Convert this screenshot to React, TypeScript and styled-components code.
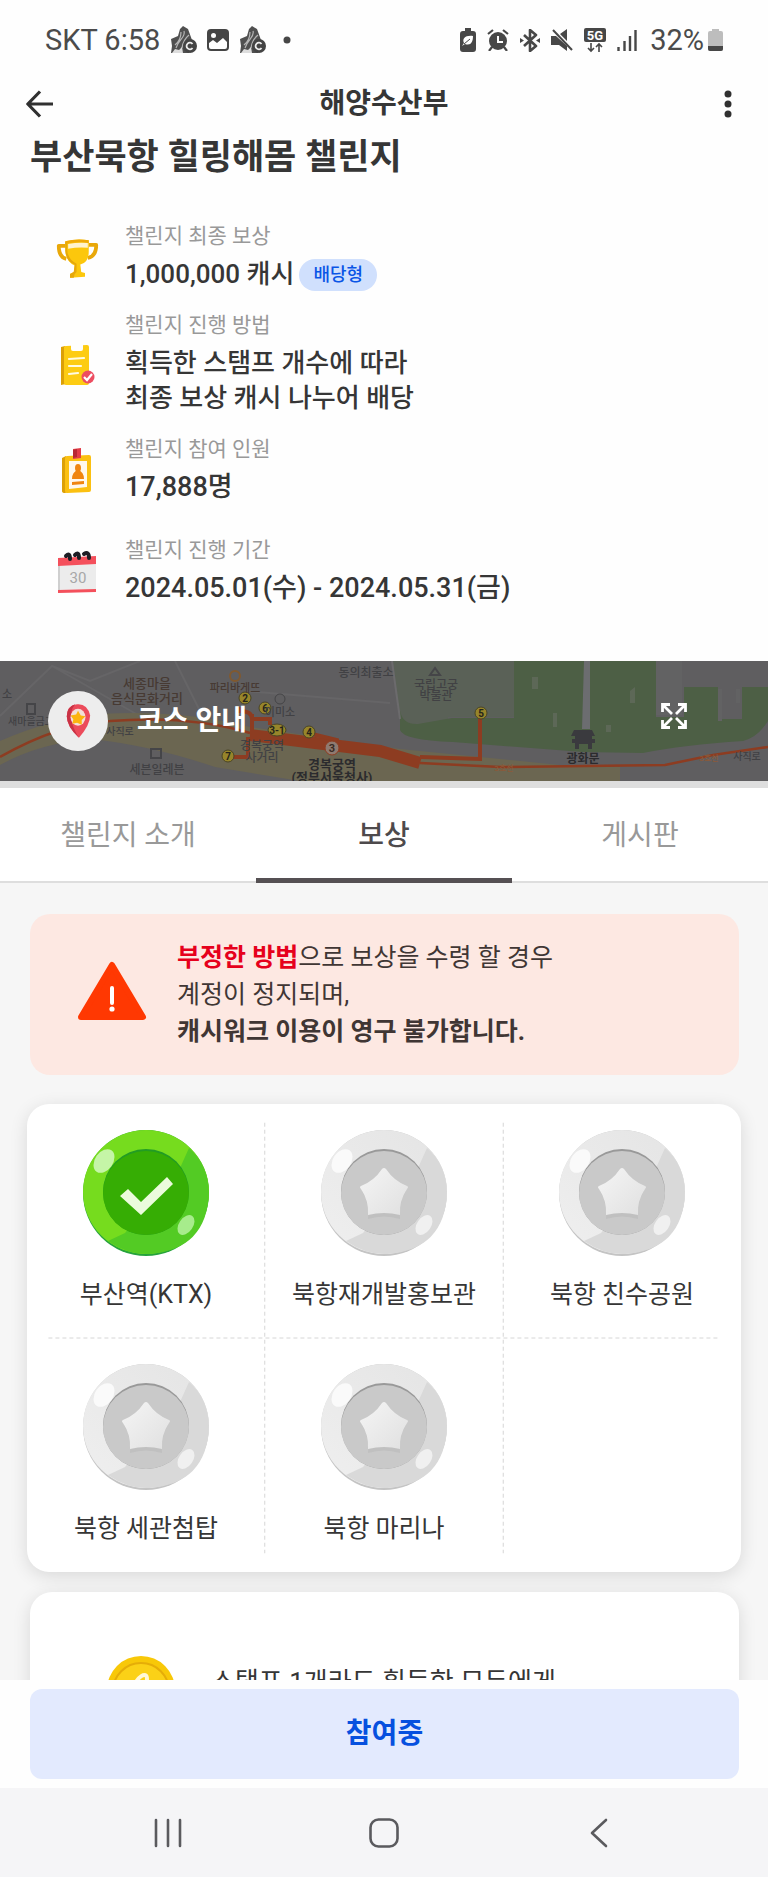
import React from "react";
import styled, { createGlobalStyle } from "styled-components";

const GlobalStyle = createGlobalStyle`
  * { box-sizing: border-box; }
  html, body { margin: 0; padding: 0; }
  body { background: #fff; }
  button { font: inherit; color: inherit; border: 0; margin: 0; padding: 0; background: none; cursor: pointer; }
  h1, h2, p, dl, dt, dd, ul { margin: 0; padding: 0; font-weight: inherit; }
  svg { display: block; flex: none; }
`;

const Screen = styled.div`
  display: flex;
  flex-direction: column;
  height: 100vh;
  overflow: hidden;
  background: #fefefe;
  color: #363636;
  font-family: Roboto, "Noto Sans CJK KR", sans-serif;
`;

const StatusBar = styled.div`
  display: flex;
  justify-content: space-between;
  align-items: center;
  flex: none;
  height: 80px;
  padding: 0 45px;
  color: #4b4b4b;
  font-size: 29px;
  line-height: 32px;
`;

const StatusGroup = styled.div<{ $gap: number }>`
  display: flex;
  align-items: center;
  gap: ${(p) => p.$gap}px;
`;

const Charge = styled.span`
  display: flex;
  align-items: center;
  gap: 4px;
  padding-left: 2px;
`;

const AppBar = styled.header`
  display: grid;
  grid-template-columns: 60px 1fr 60px;
  align-items: center;
  flex: none;
  height: 48px;
  padding: 0 10px;
`;

const IconButton = styled.button`
  display: flex;
  align-items: center;
  justify-content: center;
  height: 48px;
`;

const AppBarTitle = styled.p`
  text-align: center;
  font-size: 28px;
  line-height: 40px;
  font-weight: 700;
`;

const Content = styled.main`
  flex: 1;
  min-height: 0;
  overflow: hidden;
`;

const Title = styled.h1`
  padding: 8px 30px 0;
  font-size: 35px;
  line-height: 44px;
  font-weight: 700;
`;

const InfoList = styled.dl`
  padding: 40px 30px 55px 53px;
`;

const InfoRow = styled.div<{ $space: number }>`
  display: grid;
  grid-template-columns: 48px 1fr;
  align-items: center;
  column-gap: 24px;
  margin-top: ${(p) => p.$space}px;
`;

const IconSlot = styled.span`
  display: flex;
  justify-content: center;
  padding-top: 4px;
`;

const InfoText = styled.div`
  display: flex;
  flex-direction: column;
  gap: 5px;
`;

const InfoLabel = styled.dt`
  color: #999;
  font-size: 21px;
  line-height: 32px;
`;

const InfoValue = styled.dd<{ $wide?: boolean }>`
  display: flex;
  align-items: center;
  gap: 5px;
  color: #363636;
  font-size: ${(p) => (p.$wide ? 27 : 26)}px;
  line-height: 35px;
  font-weight: 500;
`;

const Badge = styled.span`
  padding: 0 14px;
  border-radius: 16px;
  background: #d0e0fd;
  color: #0a55e6;
  font-size: 18px;
  line-height: 32px;
  font-weight: 500;
`;

const Course = styled.button`
  position: relative;
  display: flex;
  align-items: center;
  width: 100%;
  height: 120px;
  padding: 0 81px 0 48px;
  overflow: hidden;
  background: #5e5e5f;
  text-align: left;
`;

const CourseMap = styled.svg`
  position: absolute;
  inset: 0;
  width: 100%;
  height: 100%;
`;

const CourseIcon = styled.span`
  position: relative;
  display: flex;
  align-items: center;
  justify-content: center;
  width: 60px;
  height: 60px;
  border-radius: 50%;
  background: #ededed;
`;

const CourseLabel = styled.span`
  position: relative;
  flex: 1;
  padding-left: 29px;
  color: #fff;
  font-size: 28px;
  line-height: 40px;
  font-weight: 700;
`;

const ExpandIcon = styled.svg`
  position: relative;
  margin-bottom: 10px;
`;

const Tabs = styled.div`
  display: grid;
  grid-template-columns: repeat(3, 1fr);
  border-top: 7px solid #dedede;
  background: #fff;
`;

const Tab = styled.button<{ $active?: boolean }>`
  height: 95px;
  color: ${(p) => (p.$active ? "#4e4a4c" : "#999")};
  font-size: 28px;
  line-height: 40px;
  font-weight: ${(p) => (p.$active ? 500 : 400)};
  box-shadow: inset 0 ${(p) => (p.$active ? "-5px 0 #555053" : "-2px 0 #dedede")};
`;

const Rewards = styled.section`
  min-height: 100%;
  padding: 31px 27px;
  background: #f6f6f6;
`;

const Warning = styled.div`
  display: flex;
  align-items: center;
  gap: 30px;
  margin: 0 2px 29px 3px;
  padding: 25px 47px;
  border-radius: 20px;
  background: #fde8e2;
  color: #403634;
  font-size: 25px;
  line-height: 37px;
`;

const Danger = styled.strong`
  color: #e6001c;
  font-weight: 700;
`;

const Strong = styled.strong`
  font-weight: 700;
`;

const Card = styled.div`
  border-radius: 22px;
  background: #fff;
  box-shadow: 0 4px 18px rgba(0, 0, 0, 0.12);
`;

const StampCard = styled(Card)`
  position: relative;
`;

const StampGrid = styled.ul`
  display: grid;
  grid-template-columns: repeat(3, 1fr);
  list-style: none;
`;

const StampCell = styled.li`
  display: flex;
  flex-direction: column;
  align-items: center;
  height: 234px;
  padding-top: 26px;
`;

const StampName = styled.span`
  margin-top: 21px;
  font-size: 25px;
  line-height: 36px;
  white-space: nowrap;
`;

const GridLines = styled.svg`
  position: absolute;
  inset: 0;
  width: 100%;
  height: 100%;
`;

const RewardCard = styled(Card)`
  display: flex;
  align-items: center;
  gap: 36px;
  margin: 20px 2px 0 3px;
  padding: 64px 77px;
  font-size: 26px;
  line-height: 37px;
  white-space: nowrap;
`;

const RewardText = styled.p`
  align-self: flex-start;
  padding-top: 8px;
`;

const ActionBar = styled.div`
  display: flex;
  flex: none;
  padding: 9px 29px 9px 30px;
  background: #fefefe;
`;

const JoinButton = styled.button`
  flex: 1;
  height: 90px;
  border-radius: 12px;
  background: #e3eafe;
  color: #0650df;
  font-size: 28px;
  line-height: 40px;
  font-weight: 700;
`;

const NavBar = styled.nav`
  display: flex;
  align-items: center;
  justify-content: space-between;
  flex: none;
  height: 89px;
  padding: 0 141px 0 140px;
  background: #f5f5f7;
  color: #5a5a5e;
`;

const NavButton = styled.button`
  display: flex;
  align-items: center;
  justify-content: center;
  width: 56px;
  height: 56px;
`;

const HikerIcon = () => (
  <svg width="27" height="28" viewBox="0 0 27 28" aria-hidden="true">
    <path d="M10 3 13 0l5 3 4 11-3 13H1l1-7-1-7 7-3Z" fill="#505050" />
    <path d="M11 6q0 8-6 13M14 5c2 6-5 8-8 17M19 9q-6 5-7 13" stroke="#b5b5b5" strokeWidth="1.200" fill="none" />
    <path d="m2 27 3-4 4 1 3-3 1 6Z" fill="#ddd" />
    <circle cx="20" cy="20" r="7" fill="#444" />
    <path d="M22.500 18a3.300 3.300 0 1 0 0 4" stroke="#eee" strokeWidth="1.800" fill="none" />
  </svg>
);

const PictureIcon = () => (
  <svg width="22" height="22" viewBox="0 0 22 22" aria-hidden="true">
    <rect width="22" height="22" rx="4" fill="#454545" />
    <circle cx="6.500" cy="6.500" r="2.500" fill="#fefefe" />
    <path d="m2 14 4-3 4 3 6-5 4 4v5q0 2-2 2H4q-2 0-2-2Z" fill="#fefefe" />
  </svg>
);

const StatusIcons = () => (
  <>
    <svg width="16" height="24" viewBox="0 0 16 24" aria-hidden="true">
      <path d="M5 0h6v3h2q3 0 3 3v15q0 3-3 3H3q-3 0-3-3V6q0-3 3-3h2Z" fill="#474747" />
      <path d="M13 8C5 7 2 11 4 15l-2 3 3-2c6 2 8-2 8-8Z" fill="#fefefe" />
      <path d="m4 16 6-5" stroke="#474747" />
    </svg>
    <svg width="22" height="22" viewBox="0 0 22 22" aria-hidden="true">
      <circle cx="11" cy="12" r="9" fill="#474747" />
      <path d="M1 5 6 1M21 5l-5-4M5 18l-3 4M17 18l3 4" stroke="#474747" strokeWidth="2.200" />
      <path d="M11 7v6h5" stroke="#fefefe" strokeWidth="2" fill="none" />
    </svg>
    <svg width="20" height="23" viewBox="0 0 20 23" aria-hidden="true">
      <path d="m4 6 12 11-6 5V1l6 5L4 17" stroke="#474747" strokeWidth="2.600" fill="none" strokeLinejoin="round" />
      <path d="m0 9 4 2.500L0 14ZM20 9l-4 2.500L20 14Z" fill="#474747" />
    </svg>
    <svg width="22" height="22" viewBox="0 0 22 22" aria-hidden="true">
      <path d="M0 7h5l11 10v5l-8-6H0ZM9 5l7-5v12Z" fill="#474747" />
      <path d="m2 1 19 20" stroke="#474747" strokeWidth="2" />
    </svg>
    <svg width="22" height="25" viewBox="0 0 22 25" aria-hidden="true">
      <rect width="22" height="14" rx="2" fill="#474747" />
      <text x="11" y="12" fill="#fefefe" fontSize="13" fontWeight="700" textAnchor="middle">5G</text>
      <path d="M7 15v8m-3-3 3 3 3-3M15 24v-8m-3 3 3-3 3 3" stroke="#474747" strokeWidth="1.600" fill="none" />
    </svg>
    <svg width="20" height="21" viewBox="0 0 20 21" aria-hidden="true">
      <path d="M1.500 17v4M7.500 11v10M13 6v15M18.500 0v21" stroke="#474747" strokeWidth="2.400" />
    </svg>
  </>
);

const TrophyIcon = () => (
  <svg width="45" height="42" viewBox="0 0 48 44" aria-hidden="true">
    <path d="M13 9H4q0 12 8 14M36 8h8q0 12-9 14" stroke="#e9a80a" strokeWidth="4" fill="none" strokeLinejoin="round" />
    <path d="M11 4q12-3 25-1v12q0 12-9 14l1 8 4 1v4l-16 1v-4l4-2 1-7q-9-4-10-15Z" fill="#fcc70c" />
    <path d="M11 4q12-3 25-1v3q-13-2-25 1Z" fill="#efa90a" />
    <path d="M11 5v9q1 12 10 15l-1 8-4 2v4h4l1-4 2-2V28Q13 23 13 12V5Z" fill="#e6a80a" />
    <path d="M14 7q11-2 21-1v5q-10-1-21 1Z" fill="#fff3cf" />
  </svg>
);

const ChecklistIcon = () => (
  <svg width="40" height="44" viewBox="0 0 40 44" aria-hidden="true">
    <path d="m4 4 4-1 1 38-5 1Z" fill="#dca007" />
    <path d="M7 4q0-1 2-1l21-1q2 0 2 2v36q0 2-2 2H9q-2 0-2-2Z" fill="#fdcc13" />
    <path d="M14 2h12v4q0 2-2 2h-8q-2 0-2-2Z" fill="#fefefe" />
    <path d="m12 16 15-1M12 23h12M12 31l9-1" stroke="#fffbe2" strokeWidth="2.200" strokeLinecap="round" />
    <circle cx="31" cy="34" r="6.500" fill="#ed4d61" />
    <path d="m27 34 3 3 5-6" stroke="#fff" strokeWidth="2.200" fill="none" />
  </svg>
);

const MemberIcon = () => (
  <svg width="40" height="46" viewBox="0 0 40 46" aria-hidden="true">
    <path d="m5 10 4-2 2 36-3 1q-3 0-3-2Z" fill="#dca007" />
    <path d="M8 10q0-2 2-2l22-1q2 0 2 2v33q0 2-2 2l-22 1q-2 0-2-2Z" fill="#fbc011" />
    <path d="M12 13h18v26l-18 2Z" fill="#fff8ec" />
    <path d="m16 1 8-1v10l-8 1Z" fill="#e23b46" />
    <path d="m16 2 4-1v8l-4 1Z" fill="#b62832" />
    <ellipse cx="21" cy="20" rx="3" ry="4" fill="#f0850f" />
    <path d="M15 31q0-7 6-9 6 2 6 9ZM15 34l12-1v3l-12 1Z" fill="#f0850f" />
  </svg>
);

const CalendarIcon = () => (
  <svg width="44" height="44" viewBox="0 0 44 44" aria-hidden="true">
    <path d="m3 9 4-1v34l-4 1Z" fill="#cfcfcf" />
    <path d="m5 9 36-2v34L5 43Z" fill="#ececec" />
    <path d="m3 8 38-2v8L3 16ZM3 40l38-1v3L3 43Z" fill="#f4505c" />
    <path d="M11 6q4-4 4 3M20 5q4-4 4 3M29 4q5-3 5 4" stroke="#1d1d24" strokeWidth="4" fill="none" strokeLinecap="round" />
    <text x="23" y="33" fill="#a7a7a7" fontSize="15" textAnchor="middle">30</text>
  </svg>
);

const PinIcon = () => (
  <svg width="28" height="36" viewBox="0 0 30 38" aria-hidden="true">
    <path d="M3 14Q3 2 14 1t14 12q0 10-12 24Q3 25 3 14Z" fill="#ec4b5b" />
    <path d="M3 14Q3 4 12 1 6 8 8 18q1 8 8 19Q3 25 3 14Z" fill="#c93245" />
    <ellipse cx="15" cy="15" rx="8" ry="9" fill="#f3dfd6" />
    <path d="m15 8 3 5 5 1-4 4v5l-5-2-5 1 1-5-3-4 6-1Z" fill="#fcb40f" />
  </svg>
);

const mapMarkers = [
  { x: 245, y: 37, r: 6, name: "2" },
  { x: 265, y: 47, r: 6, name: "6" },
  { x: 277, y: 69, r: 9, name: "3-1" },
  { x: 309, y: 71, r: 6, name: "4" },
  { x: 228, y: 95, r: 6, name: "7" },
  { x: 481, y: 52, r: 6, name: "5" },
];

const MapDrawing = () => (
  <CourseMap viewBox="0 0 768 120" preserveAspectRatio="xMidYMid slice" aria-hidden="true">
    <rect width="768" height="120" fill="#5f5e60" />
    <path d="M0 55 52 5 90 20 140 0M52 5 210 95M175 0l45 90M245 30l145 12" stroke="#666567" strokeWidth="2" fill="none" />
    <path d="M0 80Q50 58 100 53q80-5 150 13l150 22 160 16 60 2v14H300l-85-14Q150 84 90 78 40 82 0 104Z" fill="#6b6651" />
    <path d="M393 0h121v56h-66v8h-34q-15-2-16-16Z" fill="#5a6157" />
    <path d="M400 50q3 14 18 13l34-6h62V0h142v56h28V26h34v32h24V26h26v34q-10 16-25 20-60 4-100 12l-60-1-130-10q-50-2-53-12Z" fill="#4d5f45" />
    <path d="M656 0h26v54h-26ZM718 28h4v32h-4ZM736 28h4v14h-4Z" fill="#626263" />
    <path d="M584 0h6v68h-8Z" fill="#6c6d70" />
    <path d="M392 0q4 30 8 58" stroke="#6c6b6d" strokeWidth="2" fill="none" />
    <path d="M532 16h6v12h-6ZM630 30l5-4v16h-5ZM553 52h4v14h-4ZM606 64h5v7h-5Z" fill="#5d6857" />
    <g stroke="#8d3c21" fill="none">
      <path d="M0 96Q60 62 110 60q80-6 140 12" strokeWidth="2.500" />
      <path d="m250 74 130 16 40 12" strokeWidth="12" />
      <path d="M240 46v4q12 0 12 8h18v6M252 53v22M248 76v20h-16M312 73l25 6v12M420 96l60 2V54" strokeWidth="4" />
      <path d="m420 102 80 4 165-2 48-10 55-8" strokeWidth="2.500" />
    </g>
    {mapMarkers.map((m) => (
      <g key={m.name}>
        <ellipse cx={m.x} cy={m.y} rx={m.r} ry="6" fill="#97852a" stroke="#4a4526" />
        <text x={m.x} y={m.y + 4} fill="#25231a" fontSize="10" fontWeight="700" textAnchor="middle">{m.name}</text>
      </g>
    ))}
    <circle cx="332" cy="87" r="7" fill="#8f7a70" stroke="#8d3c21" />
    <text x="332" y="91" fill="#3a2a22" fontSize="11" fontWeight="700" textAnchor="middle">3</text>
    <circle cx="235" cy="15" r="5" fill="none" stroke="#80592f" strokeWidth="2" />
    <circle cx="280" cy="38" r="5" fill="none" stroke="#444446" />
    <g fontSize="12" fontWeight="500" textAnchor="middle">
      <g fill="#473a33" fontSize="13">
        <text x="147" y="27">세종마을</text>
        <text x="147" y="42">음식문화거리</text>
        <text x="235" y="31" fontSize="11">파리바게뜨</text>
      </g>
      <g fill="#414144">
        <text x="7" y="37" fontSize="11">소</text>
        <text x="31" y="64" fontSize="10">새마을금고</text>
        <text x="120" y="74" fontSize="10">사직로</text>
        <text x="280" y="55" fontSize="11">이미소</text>
        <text x="157" y="113">세븐일레븐</text>
        <text x="262" y="89">경복궁역</text>
        <text x="262" y="101">사거리</text>
        <text x="366" y="16">동의최출소</text>
        <text x="436" y="28">국립고궁</text>
        <text x="436" y="39">박물관</text>
        <text x="747" y="99" fontSize="10">사직로</text>
      </g>
      <g fill="#2b2b2e" fontWeight="700">
        <text x="332" y="108" fontSize="13">경복궁역</text>
        <text x="332" y="121" fontSize="13">(정부서울청사)</text>
        <text x="583" y="102">광화문</text>
      </g>
      <text x="504" y="110" fill="#8a5a3a" fontSize="8">3호선</text>
      <text x="709" y="100" fill="#8a5a3a" fontSize="8">3호선</text>
    </g>
    <path d="M27 43h8v10h-8ZM151 88h10v9h-10ZM430 14l5-7 5 7Z" fill="none" stroke="#454548" strokeWidth="2" />
    <path d="M574 69h18l3 6h-3v3h3v4h-3v6h-4v-5h-9v5h-4v-6h-3v-4h3v-3h-4Z" fill="#3a3a3e" />
  </CourseMap>
);

const WarningIcon = () => (
  <svg width="70" height="68" viewBox="0 0 70 68" aria-hidden="true">
    <path d="M35 4 66 56H4Z" fill="#ff3802" stroke="#ff3802" strokeWidth="6" strokeLinejoin="round" />
    <path d="M35 27v15" stroke="#fff" strokeWidth="4" strokeLinecap="round" />
    <circle cx="35" cy="48" r="2.600" fill="#fff" />
  </svg>
);

const Stamp = ({ done }: { done: boolean }) => (
  <svg width="126" height="126" viewBox="0 0 126 126" role="img" aria-label={done ? "획득" : "미획득"}>
    <defs>
      <linearGradient id="star" x1="0" y1="0" x2="1" y2="1">
        <stop offset="0" stopColor="#f5f5f5" />
        <stop offset="1" stopColor="#e0e0e0" />
      </linearGradient>
      <linearGradient id="greyRing" x1="1" y1="0" x2="0" y2="1">
        <stop offset="0" stopColor="#e4e4e4" />
        <stop offset="1" stopColor="#efefef" />
      </linearGradient>
    </defs>
    <circle cx="63" cy="63" r="63" fill={done ? "#26a33c" : "#c4c4c4"} />
    <ellipse cx="63" cy="62" rx="63" ry="62" fill={done ? "#76dc1e" : "url(#greyRing)"} />
    <path d="M106 18 97 38 42 103 25 111Q45 125 66 124 124 120 126 62 125 34 106 18Z" fill={done ? "#53cb24" : "#d9d9d9"} />
    <circle cx="63" cy="62" r="43" fill={done ? "#229c24" : "#999"} />
    <ellipse cx="63" cy="63" rx="43" ry="42" fill={done ? "#36ad04" : "#c9c9c9"} />
    <ellipse cx="21" cy="31" rx="9" ry="13" transform="rotate(35 21 31)" fill={done ? "#c5f5a7" : "#fafafa"} />
    <ellipse cx="103" cy="95" rx="7" ry="11" transform="rotate(35 103 95)" fill={done ? "#a7ec8c" : "#f0f0f0"} />
    {done ? (
      <path d="m37 66 8-7 13 13 26-25 6 7-32 31Z" fill="#ebfbdc" />
    ) : (
      <>
        <path d="M63 42Q71 54 85 61q-8 12-6 28-16-5-32 0 2-16-6-28 14-7 22-19Z" fill="#c0c0c0" />
        <path d="M61 39q2-2 4 0 8 12 21 17 2 1 0 3-8 12-7 26-16-4-32 0 1-14-7-26-2-2 0-3 13-5 21-17Z" fill="url(#star)" />
      </>
    )}
  </svg>
);

const CoinIcon = () => (
  <svg width="68" height="68" viewBox="0 0 68 68" aria-hidden="true">
    <circle cx="34" cy="34" r="34" fill="#f8c808" />
    <circle cx="34" cy="35" r="28" fill="#fbd117" stroke="#e5ad08" strokeWidth="2" />
    <path d="M28 30c1-8 12-16 12-7 0 8-12 16-12 22 0 7 8 4 12-2" stroke="#fff8d8" strokeWidth="4" fill="none" />
  </svg>
);

const infoRows = [
  { label: "챌린지 최종 보상", lines: ["1,000,000 캐시"], badge: "배당형", icon: <TrophyIcon />, space: 0 },
  { label: "챌린지 진행 방법", lines: ["획득한 스탬프 개수에 따라", "최종 보상 캐시 나누어 배당"], icon: <ChecklistIcon />, space: 17 },
  { label: "챌린지 참여 인원", lines: ["17,888명"], wide: true, icon: <MemberIcon />, space: 17 },
  { label: "챌린지 진행 기간", lines: ["2024.05.01(수) - 2024.05.31(금)"], wide: true, icon: <CalendarIcon />, space: 29 },
];

const stamps = [
  { name: "부산역(KTX)", done: true },
  { name: "북항재개발홍보관", done: false },
  { name: "북항 친수공원", done: false },
  { name: "북항 세관첨탑", done: false },
  { name: "북항 마리나", done: false },
];

export default function App() {
  return (
    <Screen>
      <GlobalStyle />
      <StatusBar>
        <StatusGroup $gap={10}>
          <span>SKT 6:58</span>
          <HikerIcon />
          <PictureIcon />
          <HikerIcon />
          <svg width="24" height="8" viewBox="0 0 24 8" aria-hidden="true">
            <circle cx="11" cy="4" r="3.500" fill="#474747" />
          </svg>
        </StatusGroup>
        <StatusGroup $gap={11}>
          <StatusIcons />
          <Charge>
            <span>32%</span>
            <svg width="15" height="22" viewBox="0 0 15 22" aria-hidden="true">
              <path d="M4 0h7v2h2q2 0 2 2v16q0 2-2 2H2q-2 0-2-2V4q0-2 2-2h2Z" fill="#bdbdbd" />
              <path d="M0 17h15v3q0 2-2 2H2q-2 0-2-2Z" fill="#474747" />
            </svg>
          </Charge>
        </StatusGroup>
      </StatusBar>

      <AppBar>
        <IconButton aria-label="뒤로">
          <svg width="28" height="28" viewBox="0 0 28 28" fill="none" stroke="#303030" strokeWidth="3.200" aria-hidden="true">
            <path d="M14 1.500 1.800 14 14 26.500M2 14h25" strokeLinejoin="round" />
          </svg>
        </IconButton>
        <AppBarTitle>해양수산부</AppBarTitle>
        <IconButton aria-label="더보기">
          <svg width="8" height="28" viewBox="0 0 8 28" fill="#303030" aria-hidden="true">
            <circle cx="4" cy="4" r="3.500" />
            <circle cx="4" cy="14" r="3.500" />
            <circle cx="4" cy="24" r="3.500" />
          </svg>
        </IconButton>
      </AppBar>

      <Content>
        <Title>부산묵항 힐링해몸 챌린지</Title>
        <InfoList>
          {infoRows.map((row) => (
            <InfoRow key={row.label} $space={row.space}>
              <IconSlot>{row.icon}</IconSlot>
              <InfoText>
                <InfoLabel>{row.label}</InfoLabel>
                <div>
                  {row.lines.map((line) => (
                    <InfoValue key={line} $wide={row.wide}>
                      {line}
                      {row.badge && <Badge>{row.badge}</Badge>}
                    </InfoValue>
                  ))}
                </div>
              </InfoText>
            </InfoRow>
          ))}
        </InfoList>

        <Course>
          <MapDrawing />
          <CourseIcon><PinIcon /></CourseIcon>
          <CourseLabel>코스 안내</CourseLabel>
          <ExpandIcon width="26" height="26" viewBox="0 0 26 26" fill="none" stroke="#fff" strokeWidth="2.800" aria-hidden="true">
            <path d="M1.500 9V1.500H9M17 1.500h7.500V9M24.500 17v7.500H17M9 24.500H1.500V17M2 2l9 9M24 2l-9 9M24 24l-9-9M2 24l9-9" />
          </ExpandIcon>
        </Course>

        <Tabs role="tablist">
          <Tab role="tab">챌린지 소개</Tab>
          <Tab role="tab" aria-selected $active>보상</Tab>
          <Tab role="tab">게시판</Tab>
        </Tabs>

        <Rewards>
          <Warning>
            <WarningIcon />
            <div>
              <p><Danger>부정한 방법</Danger>으로 보상을 수령 할 경우</p>
              <p>계정이 정지되며,</p>
              <p><Strong>캐시워크 이용이 영구 불가합니다.</Strong></p>
            </div>
          </Warning>

          <StampCard>
            <GridLines aria-hidden="true">
              <g stroke="#d6d6d6" strokeDasharray="4 3">
                <line x1="3%" x2="97%" y1="50%" y2="50%" />
                <line x1="33.300%" x2="33.300%" y1="4%" y2="96%" />
                <line x1="66.700%" x2="66.700%" y1="4%" y2="96%" />
              </g>
            </GridLines>
            <StampGrid>
              {stamps.map((stamp) => (
                <StampCell key={stamp.name}>
                  <Stamp done={stamp.done} />
                  <StampName>{stamp.name}</StampName>
                </StampCell>
              ))}
            </StampGrid>
          </StampCard>

          <RewardCard>
            <CoinIcon />
            <RewardText>스탬프 1개라도 획득한 모두에게</RewardText>
          </RewardCard>
        </Rewards>
      </Content>

      <ActionBar>
        <JoinButton>참여중</JoinButton>
      </ActionBar>
      <NavBar>
        <NavButton aria-label="최근 앱">
          <svg width="28" height="30" viewBox="0 0 28 30" stroke="currentColor" strokeWidth="2.600" strokeLinecap="round" aria-hidden="true">
            <path d="M2 2v26M14 2v26M26 2v26" />
          </svg>
        </NavButton>
        <NavButton aria-label="홈">
          <svg width="30" height="30" viewBox="0 0 30 30" fill="none" stroke="currentColor" strokeWidth="2.600" aria-hidden="true">
            <rect x="1.500" y="1.500" width="27" height="27" rx="8" />
          </svg>
        </NavButton>
        <NavButton aria-label="뒤로 가기">
          <svg width="18" height="30" viewBox="0 0 18 30" fill="none" stroke="currentColor" strokeWidth="2.600" strokeLinecap="round" strokeLinejoin="round" aria-hidden="true">
            <path d="M16 2 2 15l14 13" />
          </svg>
        </NavButton>
      </NavBar>
    </Screen>
  );
}
